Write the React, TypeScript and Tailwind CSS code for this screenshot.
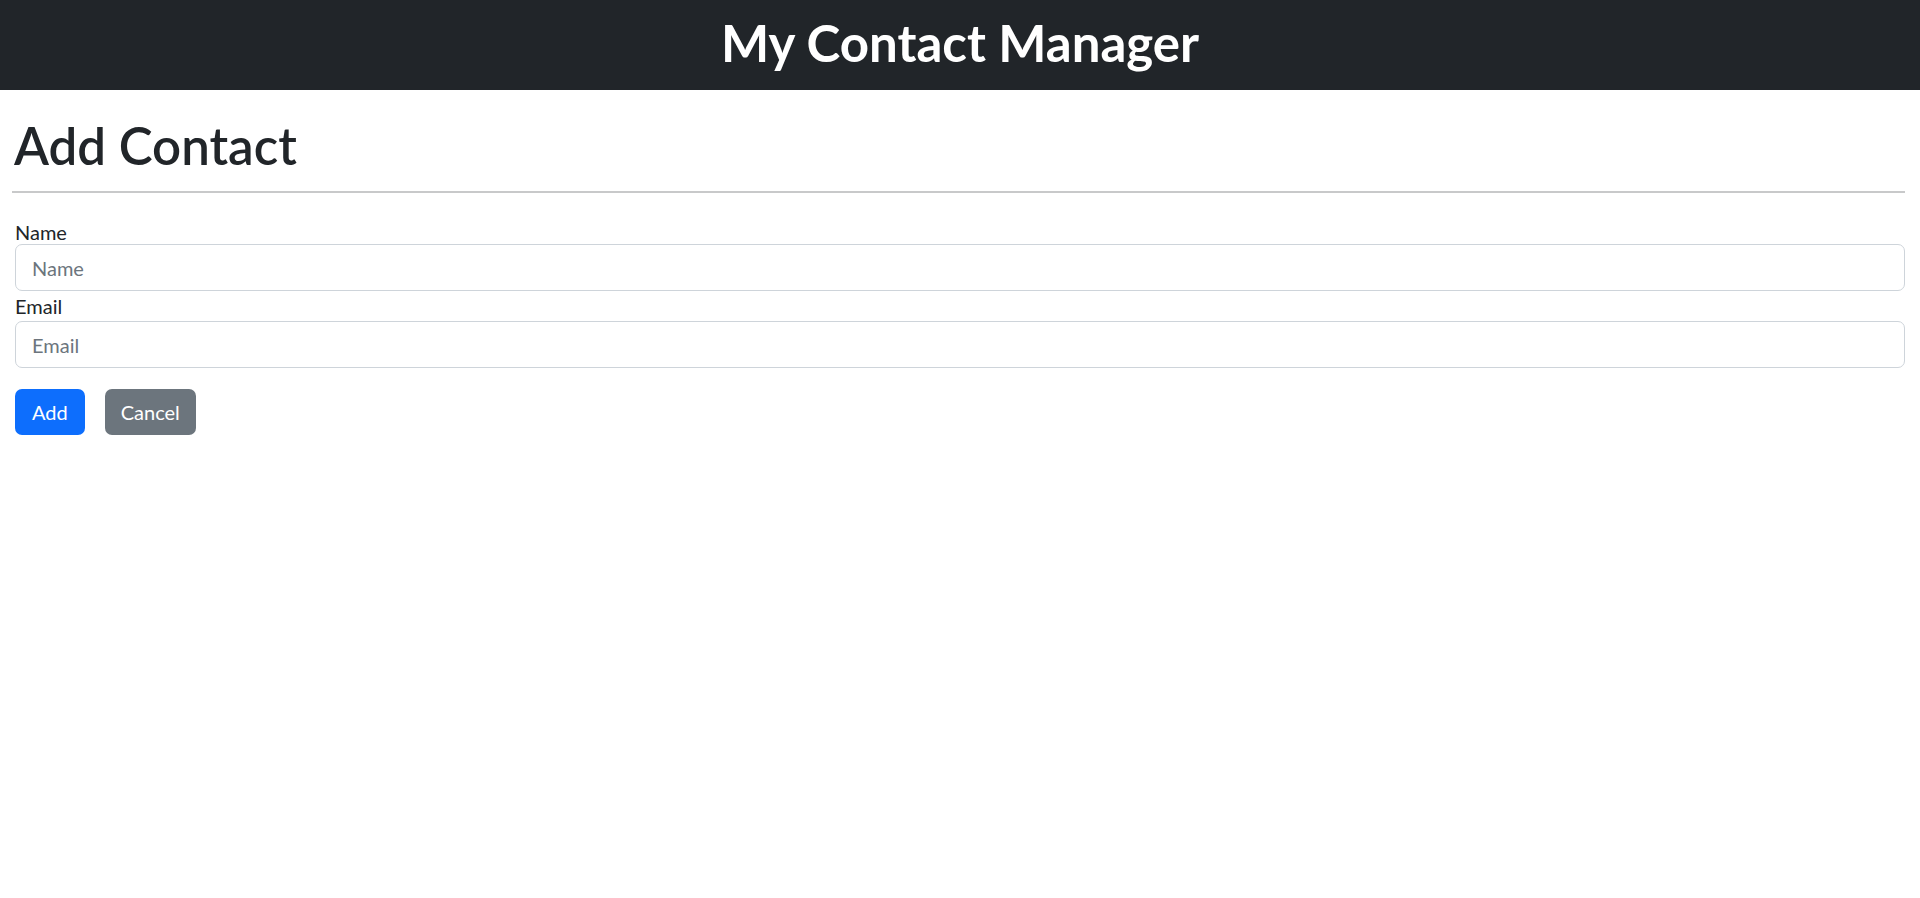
export default function App() {
  return (
    <div className="min-h-screen bg-white text-[#212529] font-['Lato',sans-serif]">
      {/* Header */}
      <header className="h-[90px] bg-[#212529] flex items-center justify-center">
        <h1 className="text-white text-[51px] font-bold leading-none -mt-[5px]">My Contact Manager</h1>
      </header>

      <main className="pl-3 pr-[15px]">
        <h2 className="text-[51px] font-semibold leading-none pt-[30px] pl-[2px]">Add Contact</h2>
        <hr className="mt-[20px] border-0 h-[2px] bg-[#c8c9ca]" />

        <form className="ml-[3px] mt-[27px] text-[20px]">
          <div>
            <label className="block leading-[24px]">Name</label>
            <input
              type="text"
              placeholder="Name"
              className="block w-full h-[47px] px-[16px] border border-[#ced4da] rounded-[7px] placeholder:text-[#6c757d] outline-none"
            />
          </div>
          <div>
            <label className="block leading-[30px]">Email</label>
            <input
              type="text"
              placeholder="Email"
              className="block w-full h-[47px] px-[16px] border border-[#ced4da] rounded-[7px] placeholder:text-[#6c757d] outline-none"
            />
          </div>
          <div className="flex gap-[20px] mt-[21px]">
            <button type="button" className="h-[46px] px-[17px] bg-[#0d6efd] text-white rounded-[7px]">
              Add
            </button>
            <button type="button" className="h-[46px] px-[16px] bg-[#6c757d] text-white rounded-[7px]">
              Cancel
            </button>
          </div>
        </form>
      </main>
    </div>
  );
}
